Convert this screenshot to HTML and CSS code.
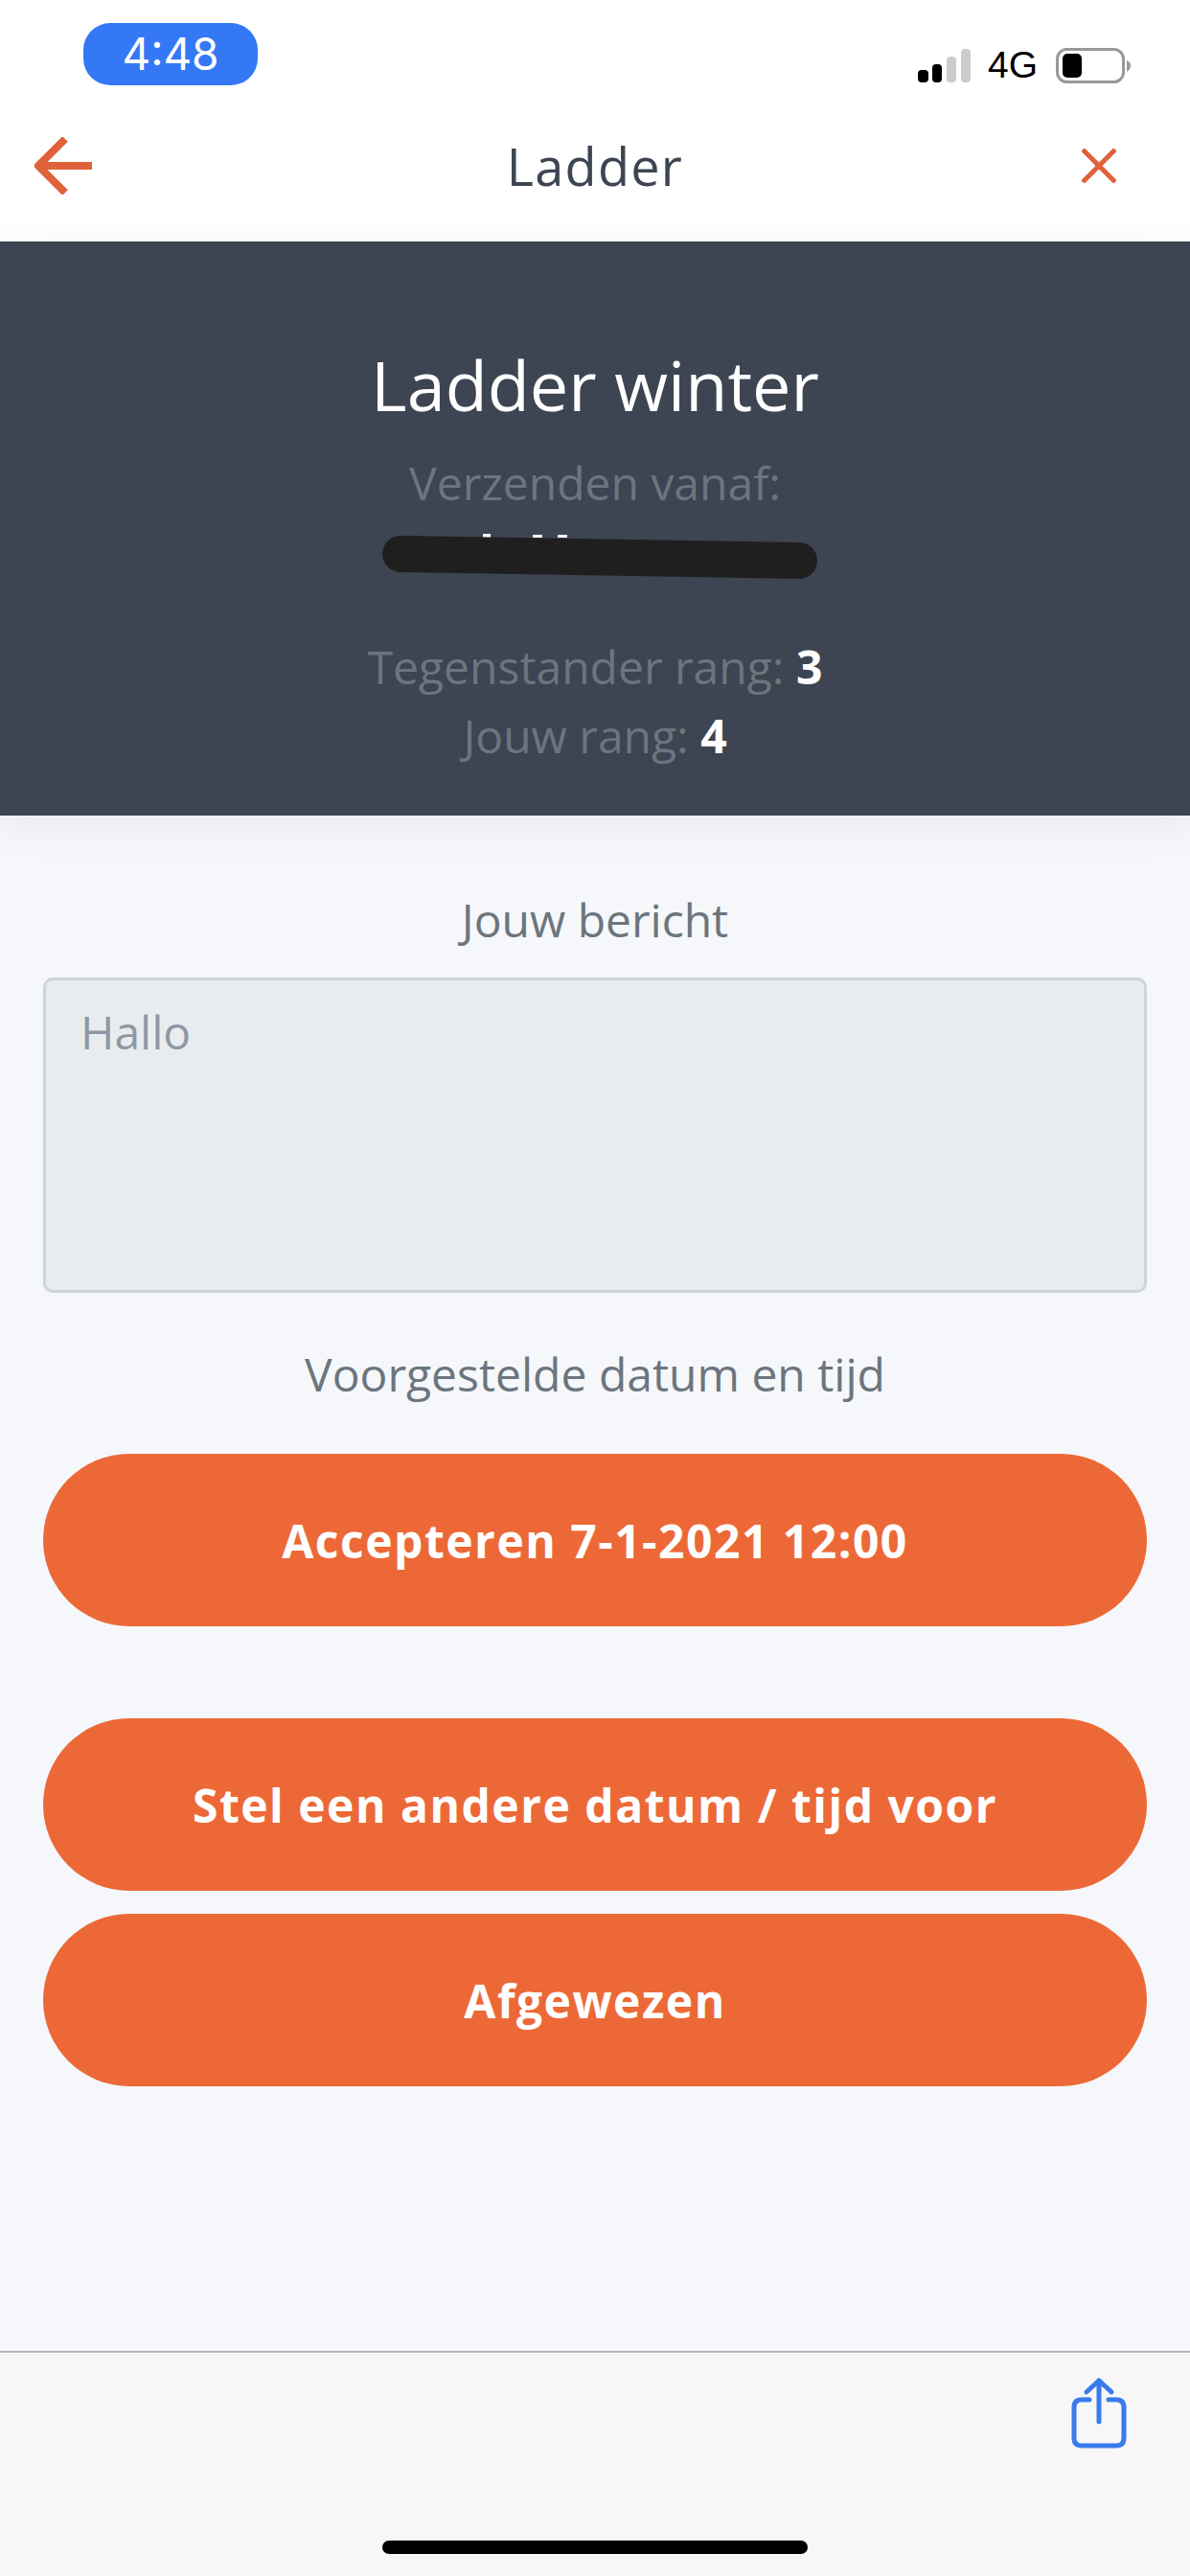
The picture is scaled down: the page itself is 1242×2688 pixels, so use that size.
FILE: index.html
```html
<!DOCTYPE html>
<html lang="nl">
<head>
<meta charset="utf-8">
<title>Ladder</title>
<link rel="stylesheet" href="styles.css">
</head>
<body>
<div class="app">
  <header class="top">
    <div class="status">
      <div class="time-pill">4:48</div>
      <div class="status-right">
        <svg class="signal" width="55" height="35" viewBox="0 0 55 35">
          <rect x="0" y="22" width="11" height="13" rx="4" fill="#000"/>
          <rect x="15" y="16" width="10" height="19" rx="4" fill="#000"/>
          <rect x="30" y="8" width="10" height="27" rx="4" fill="#ccc"/>
          <rect x="45" y="0" width="10" height="35" rx="4" fill="#ccc"/>
        </svg>
        <span class="net">4G</span>
        <svg class="battery" width="78" height="37" viewBox="0 0 78 37">
          <rect x="1.5" y="1.5" width="69" height="34" rx="10" fill="none" stroke="#999" stroke-width="3"/>
          <rect x="7" y="6" width="20" height="25" rx="5" fill="#000"/>
          <path d="M74 13 C77 14 78 16 78 18.500 C78 21 77 23 74 25 Z" fill="#999"/>
        </svg>
      </div>
    </div>
    <nav class="nav">
      <svg class="back" width="60" height="60" viewBox="0 0 60 60">
        <path d="M60 30 H4 M32 2 L4 30 L32 58" fill="none" stroke="#e0623a" stroke-width="8"/>
      </svg>
      <h1 class="nav-title">Ladder</h1>
      <svg class="close" width="36" height="36" viewBox="0 0 36 36">
        <path d="M1 1 L35 35 M35 1 L1 35" fill="none" stroke="#e0623a" stroke-width="5"/>
      </svg>
    </nav>
  </header>

  <section class="hero">
    <h2 class="hero-title">Ladder winter</h2>
    <p class="hero-line">Verzenden vanaf:</p>
    <div class="sender">
      <svg class="scribble" width="456" height="52" viewBox="0 0 456 52">
        <rect x="68" y="6" width="8" height="2" fill="#fff"/>
        <rect x="106" y="3" width="8" height="4" fill="#fff"/>
        <rect x="158" y="4" width="10" height="3" fill="#fff"/>
        <rect x="184" y="4" width="10" height="3" fill="#fff"/>
        <path d="M20 24 L436 31" fill="none" stroke="#1f1f1f" stroke-width="38" stroke-linecap="round"/>
      </svg>
    </div>
    <p class="hero-line">Tegenstander rang: <strong>3</strong></p>
    <p class="hero-line">Jouw rang: <strong>4</strong></p>
  </section>

  <main class="content">
    <p class="label">Jouw bericht</p>
    <div class="message">Hallo</div>
    <p class="label label-date">Voorgestelde datum en tijd</p>
    <button class="btn btn-accept">Accepteren 7-1-2021 12:00</button>
    <button class="btn btn-other">Stel een andere datum / tijd voor</button>
    <button class="btn btn-reject">Afgewezen</button>
  </main>

  <footer class="toolbar">
    <svg class="share" width="58" height="74" viewBox="0 0 58 74">
      <path d="M19 23 H11 Q3 23 3 31 V63 Q3 71 11 71 H47 Q55 71 55 63 V31 Q55 23 47 23 H39" fill="none" stroke="#3a7bec" stroke-width="5" stroke-linecap="round"/>
      <path d="M29 46 V3 M16 15 L29 3 L42 15" fill="none" stroke="#3a7bec" stroke-width="5" stroke-linecap="round" stroke-linejoin="round"/>
    </svg>
    <div class="home-indicator"></div>
  </footer>
</div>
</body>
</html>
```

FILE: styles.css
```css
* { box-sizing: border-box; }
html, body { margin: 0; padding: 0; }
body { font-family: "Open Sans", "Noto Sans", sans-serif; background: #f5f7fb; }
p, h1, h2 { margin: 0; font-weight: 400; }

.app { width: 1242px; height: 2688px; display: flex; flex-direction: column; overflow: hidden; }

.top { height: 252px; background: #fff; display: flex; flex-direction: column; flex: none; }
.status { height: 126px; padding: 24px 62px 0 87px; display: flex; justify-content: space-between; align-items: flex-start; }
.time-pill { width: 182px; height: 65px; border-radius: 28px; background: #3478f6; color: #fff; font-family: Inter, Roboto, sans-serif; font-size: 46px; line-height: 65px; text-align: center; }
.status-right { display: flex; align-items: center; height: 38px; margin-top: 25px; }
.signal { display: block; margin-right: 18px; }
.net { font-family: "Liberation Sans", Arial, sans-serif; font-size: 39px; line-height: 38px; color: #000; margin-right: 19px; }
.battery { display: block; }

.nav { display: grid; grid-template-columns: 1fr auto 1fr; align-items: center; padding: 0 36px; height: 94px; }
.back { display: block; }
.close { display: block; justify-self: end; margin-right: 41px; }
.nav-title { font-size: 54px; letter-spacing: 1.3px; line-height: 94px; color: #3e4552; }

.hero { height: 599px; flex: none; background: #3d4452; padding-top: 106px; text-align: center; box-shadow: 0 10px 40px rgba(60, 70, 90, 0.08); position: relative; }
.hero-title { font-size: 72px; line-height: 86px; color: #fff; margin-bottom: 24px; }
.hero-line { font-size: 48px; line-height: 72px; color: #6c757d; }
.hero-line strong { font-weight: 700; color: #fff; }
.sender { height: 120px; display: flex; justify-content: center; align-items: flex-start; padding-left: 10px; }
.scribble { display: block; margin-top: 14px; }

.content { flex: 1; padding: 73px 45px 0; display: flex; flex-direction: column; }
.label { font-size: 48px; line-height: 72px; color: #6c757d; text-align: center; }
.message { height: 329px; margin-top: 24px; background: #e9ecef; border: 3px solid #ced4da; border-radius: 10px; padding: 18px 38px; font-size: 48px; line-height: 72px; color: #8e98a4; text-indent: -2px; }
.label-date { margin-top: 49px; }
.btn { display: block; width: 100%; height: 180px; border: 0; border-radius: 90px; background: #ec6937; color: #fff; font-family: inherit; font-size: 48px; font-weight: 700; letter-spacing: 1.5px; text-align: center; flex: none; }
.btn-accept { margin-top: 47px; }
.btn-other { margin-top: 96px; }
.btn-reject { margin-top: 24px; }

.toolbar { height: 235px; flex: none; background: #f7f7f8; border-top: 2px solid #b5b5b7; position: relative; }
.share { position: absolute; right: 66px; top: 26px; display: block; }
.home-indicator { position: absolute; left: 399px; bottom: 23px; width: 444px; height: 14px; border-radius: 7px; background: #000; }
```
